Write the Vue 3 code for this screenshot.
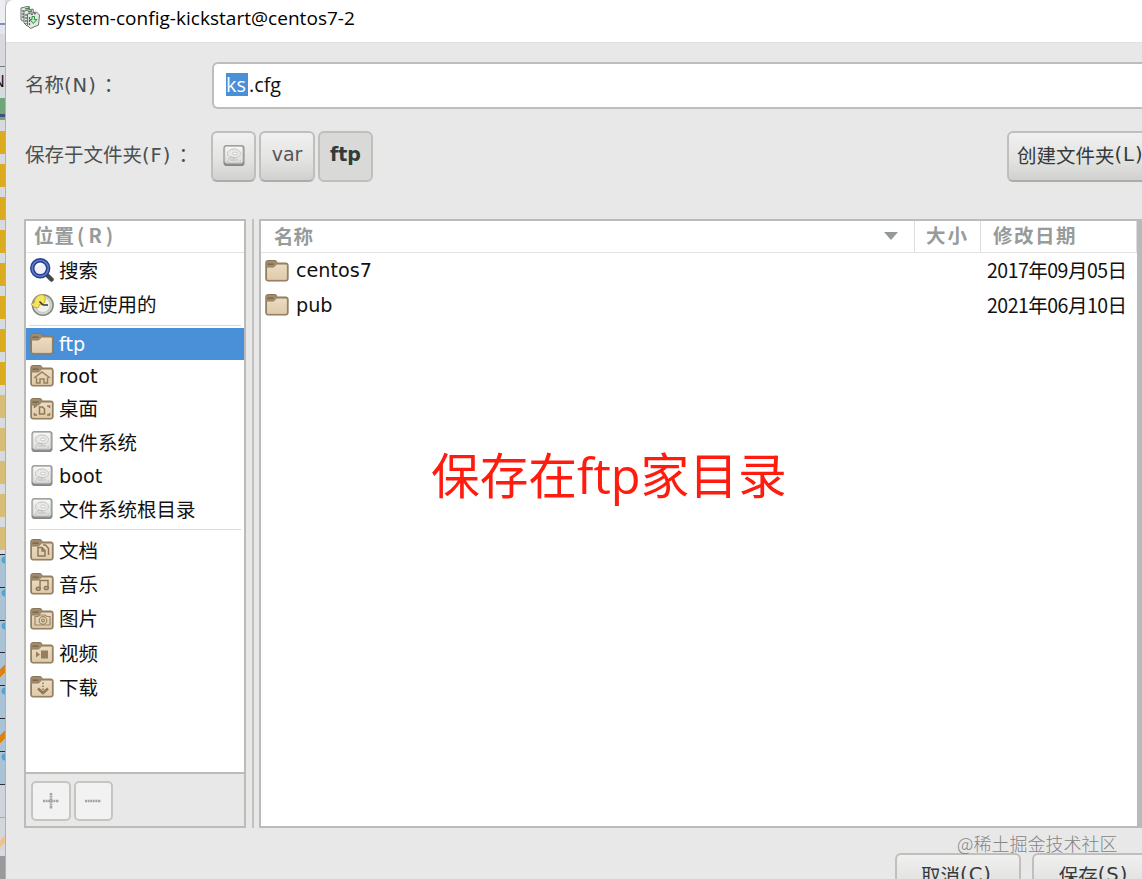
<template>
  <div class="screen">
    <!-- Borde de la ventana de atrás -->
    <div class="behind">
      <div class="behind-top"></div>
      <div class="behind-name">N</div>
      <div class="behind-green"></div>
      <div v-for="n in 13" :key="'g' + n" class="bar" :class="{ pale: n > 8 }"></div>
      <div
        v-for="n in 7"
        :key="'b' + n"
        class="tile"
        :class="{ slash: n === 4 || n === 6 }"
      ></div>
      <div class="tile-faded"></div>
      <div class="tile-faded second"></div>
      <div class="behind-bottom"></div>
    </div>

    <div class="window">
      <header class="titlebar">
        <svg class="app-icon" viewBox="0 0 20 24" width="20" height="24">
          <g fill="#e4e8e4" stroke="#6a736c" stroke-width="1">
            <path d="M1 2l8-2 2 12-8 3-2-1z" />
            <path d="M4 5l9-2 2 13-8 4-3-3z" />
            <path d="M7.500 8l9-2 3 3-1 10-8 3.500-3-3z" />
          </g>
          <path d="M5 3l4-1M8 6l4-1M3 4v8M6 8v10M9.500 11v8M11 8.500l5-1" stroke="#505b53" stroke-width="1.200" stroke-dasharray="2 1" />
          <path d="M12 10.500h2.500v3H17l-3.700 4-3.500-4H12z" fill="#b9ecba" stroke="#2f8e45" stroke-width="1" />
          <path d="M6.500 3l3-1M9 6l3-1" stroke="#2a963d" stroke-width="1.500" />
        </svg>
        <span class="title">system-config-kickstart@centos7-2</span>
      </header>

      <div class="name-row">
        <label class="name-label">名称<span class="mnemonic">(N)</span><span class="colon">：</span></label>
        <div class="name-input"><span class="selected">ks</span><span>.cfg</span></div>
      </div>

      <div class="path-row">
        <label class="path-label">保存于文件夹<span class="mnemonic">(F)</span><span class="colon">：</span></label>
        <button class="btn disk-btn">
          <svg viewBox="0 0 24 24" width="24" height="24"><use href="#disk" /></svg>
        </button>
        <button class="btn var-btn">var</button>
        <button class="btn ftp-btn">ftp</button>
        <button class="btn create-btn">创建文件夹<span class="mnemonic">(L)</span></button>
      </div>

      <div class="panes">
        <aside class="sidebar">
          <div class="places-head">位置<span class="key">(R)</span></div>
          <div class="places">
            <template v-for="place in places" :key="place.name">
              <div v-if="place.separator" class="separator"></div>
              <div class="place" :class="{ active: place.name === current }" @click="current = place.name">
                <svg class="icon" viewBox="0 0 24 24" width="24" height="24">
                  <use :href="'#' + place.icon" />
                  <use v-if="place.emblem" :href="'#' + place.emblem" />
                </svg>
                <span :class="place.latin ? 'latin' : 'cjk'">{{ place.name }}</span>
              </div>
            </template>
          </div>
          <div class="places-tools">
            <button class="tool">
              <svg viewBox="0 0 16 16" width="16" height="16">
                <path d="M0 8h16M8 0v16" stroke="#a2a4a4" stroke-width="2.600" stroke-dasharray="2 .6" />
              </svg>
            </button>
            <button class="tool">
              <svg viewBox="0 0 16 16" width="16" height="16">
                <path d="M0 8h16" stroke="#a2a4a4" stroke-width="2.600" stroke-dasharray="2 .6" />
              </svg>
            </button>
          </div>
        </aside>

        <div class="handle"></div>

        <main class="files">
          <div class="files-head">
            <div class="col-name">
              <span>名称</span>
              <svg viewBox="0 0 14 8" width="14" height="8"><path d="M0 0h14L7 8z" fill="#949a98" /></svg>
            </div>
            <div class="col-size">大小</div>
            <div class="col-date">修改日期</div>
          </div>
          <div v-for="file in files" :key="file.name" class="file">
            <svg class="icon" viewBox="0 0 24 24" width="24" height="24"><use href="#folder" /></svg>
            <span class="latin">{{ file.name }}</span>
            <span class="date">{{ file.date }}</span>
          </div>
          <div class="note">保存在<span class="note-latin">ftp</span>家目录</div>
        </main>
        <div class="edge"></div>
      </div>

      <footer class="actions">
        <button class="btn cancel-btn">取消<span class="mnemonic">(C)</span></button>
        <button class="btn save-btn">保存<span class="mnemonic">(S)</span></button>
        <span class="watermark">@稀土掘金技术社区</span>
      </footer>
    </div>

    <svg class="defs" width="0" height="0">
      <defs>
        <linearGradient id="paper" x1="0" y1="0" x2="0" y2="1">
          <stop offset="0" stop-color="#ecdcc3" />
          <stop offset="1" stop-color="#dfcaab" />
        </linearGradient>
        <linearGradient id="metal" x1="0" y1="0" x2="0" y2="1">
          <stop offset="0" stop-color="#f7f7f6" />
          <stop offset="1" stop-color="#dcdddb" />
        </linearGradient>
        <symbol id="folder" viewBox="0 0 24 24">
          <path d="M.8 19V3.500q0-2 2-2h7.500q1.500 0 1.800 2.500h9q2 0 2 2v14q0 2-2 2H2.800q-2 0-2-2z" fill="#a08b6d" stroke="#8c7859" />
          <path d="M1.500 8h7l3.200-3H21q1.400 0 1.400 1.400V20q0 1.400-1.400 1.400H3Q1.500 21.400 1.500 20z" fill="url(#paper)" stroke="#927d5d" />
          <path d="M2.500 5.200h6" stroke="#796a50" stroke-width="1.500" />
        </symbol>
        <symbol id="disk" viewBox="0 0 24 24">
          <path d="M2 3.500q0-1.800 1.800-1.800h16.400q1.800 0 1.800 1.800v16q0 2-2 2H4q-2 0-2-2z" fill="#8c8f8b" stroke="#858783" />
          <rect x="2.700" y="2.200" width="18.300" height="17" rx="1.800" fill="url(#metal)" stroke="#b4b6b2" />
          <ellipse cx="12" cy="9.500" rx="6.500" ry="4.500" fill="#e9eae8" stroke="#c3c5c1" />
          <ellipse cx="13" cy="9.500" rx="2.500" ry="1.400" fill="#fafafa" stroke="#bbb" stroke-width=".8" />
          <path d="M6 15.500l3-2.500 4 1M5 17h1.500M17.500 17H19M8 16h8" fill="none" stroke="#b9bbb7" />
        </symbol>
        <symbol id="search" viewBox="0 0 24 24">
          <path d="M17 17l4.500 4.500" stroke="#42484b" stroke-width="4.500" stroke-linecap="round" />
          <circle cx="10.200" cy="10.300" r="8" fill="#eef1f8" stroke="#273e93" stroke-width="4.400" />
          <circle cx="10.200" cy="10.300" r="8" fill="none" stroke="#5f7cc0" stroke-width="1.600" />
          <path d="M6.500 9q1-3.500 5-3" fill="none" stroke="#fff" stroke-width="2" />
        </symbol>
        <symbol id="recent" viewBox="0 0 24 24">
          <circle cx="12.800" cy="12" r="10.300" fill="#d4d6d0" stroke="#85887f" stroke-width="1.600" />
          <circle cx="12.800" cy="12" r="7.500" fill="#f0f1ef" stroke="#c5c7c1" />
          <path d="M1 11l3-1Q5 2.500 12 1.500l3 2V9l-3 3-2-1-2 4-4-1z" fill="#f3e563" stroke="#cfae23" />
          <path d="M13 12l-3.500-3.500M13 12h5" stroke="#333a35" stroke-width="1.500" />
        </symbol>
        <g id="home" fill="none" stroke="#98805d" stroke-width="1.500">
          <path d="M4 14l8-6 8 6M6.500 13.500V19H10v-4h4v4h3.500v-5.500" />
        </g>
        <g id="desktop" fill="none" stroke="#8e7857" stroke-width="1.500">
          <path d="M4.500 11V9H7M17 9h2.500v2M4.500 16v2H7M17 18h2.500v-2M9.500 10h3l2 2v5h-5z" />
        </g>
        <g id="docs" fill="none" stroke="#8e7857" stroke-width="1.500">
          <path d="M8 9.500h4l3 3V18H8zM12 9.500V13h3M13 7h2.500l3 3.500V17" />
        </g>
        <g id="music" fill="#c9ae87" stroke="#8e7857" stroke-width="1.400">
          <path d="M10 16.500V8.500h8V15.500" fill="none" />
          <ellipse cx="8.300" cy="16.800" rx="2" ry="1.600" />
          <ellipse cx="16.300" cy="16" rx="2" ry="1.600" />
        </g>
        <g id="pictures" fill="none" stroke="#9c8664" stroke-width="1.200">
          <path d="M5 9.500h3l2-1.500h5l2 1.500h3V18H5z" />
          <circle cx="13" cy="13.500" r="3.800" />
          <circle cx="13" cy="13.500" r="1.400" />
        </g>
        <g id="video" fill="#94805f">
          <path d="M11 9.500h7v8h-7zM6 10.500l4 3-4 3z" />
        </g>
        <g id="download" fill="none" stroke="#8e7857">
          <path d="M8 13.500l5 4.500 5-4.500" stroke-width="2.600" />
          <path d="M13 7.500v8" stroke-width="1.600" stroke-dasharray="1.500 1.500" />
        </g>
      </defs>
    </svg>
  </div>
</template>

<script setup>
import { ref } from 'vue'

const current = ref('ftp')

const places = [
  { name: '搜索', icon: 'search' },
  { name: '最近使用的', icon: 'recent' },
  { name: 'ftp', icon: 'folder', latin: true, separator: true },
  { name: 'root', icon: 'folder', emblem: 'home', latin: true },
  { name: '桌面', icon: 'folder', emblem: 'desktop' },
  { name: '文件系统', icon: 'disk' },
  { name: 'boot', icon: 'disk', latin: true },
  { name: '文件系统根目录', icon: 'disk' },
  { name: '文档', icon: 'folder', emblem: 'docs', separator: true },
  { name: '音乐', icon: 'folder', emblem: 'music' },
  { name: '图片', icon: 'folder', emblem: 'pictures' },
  { name: '视频', icon: 'folder', emblem: 'video' },
  { name: '下载', icon: 'folder', emblem: 'download' }
]

const files = [
  { name: 'centos7', date: '2017年09月05日' },
  { name: 'pub', date: '2021年06月10日' }
]
</script>

<style>
body {
  margin: 0;
  overflow: hidden;
}
</style>

<style scoped>
.screen {
  display: flex;
  width: 1142px;
  height: 879px;
  overflow: hidden;
  background: #d7dade;
  font-family: "Noto Sans CJK SC", sans-serif;
  font-size: 19.5px;
  color: #111;
}

.screen * {
  box-sizing: border-box;
}

.defs {
  position: absolute;
}

/* Ventana de atrás */
.behind {
  width: 5px;
  flex: none;
  overflow: hidden;
  background: #d7dade;
}

.behind-top {
  height: 66px;
  background: linear-gradient(#eeeef2 0 23px, #858fb5 23px 25px, #e3e6ed 25px 34px, #d8dade 34px);
}

.behind-name {
  height: 32px;
  border-top: 1px solid #777;
  font: 16px/29px "Liberation Sans", sans-serif;
  text-indent: -7px;
}

.behind-green {
  height: 33px;
  background: linear-gradient(#70a579 0 16px, #44507a 16px 19px, #70a579 19px 22px, #d7dade 22px);
}

.bar {
  height: 23px;
  margin-bottom: 10px;
  background: #dbac20;
}

.bar.pale {
  background: #d8bd78;
}

.bar:nth-of-type(16) {
  margin-bottom: 4px;
}

.tile {
  height: 32.800px;
  border-top: 1px solid #252a30;
  background: radial-gradient(circle at 5px 5px, #55a4ce 0 3px, transparent 4px), #a9c2d6;
}

.tile.slash {
  background: linear-gradient(135deg, transparent 0 43%, #dc8211 45% 65%, transparent 67%), #a9c2d6;
}

.tile-faded {
  height: 33px;
  border-top: 1px solid #29313a;
  background: #ced4d9;
}

.tile-faded.second {
  border-color: #aaa;
  background: linear-gradient(135deg, #d3d7db 0 60%, #eac393 61% 80%, #d3d7db 81%);
}

.behind-bottom {
  height: 40px;
  margin-top: 6px;
  background: #9a9a9c;
}

.window {
  flex: 1;
  min-width: 0;
  display: flex;
  flex-direction: column;
  border-left: 1px solid #b0b0b2;
  border-top-left-radius: 8px;
  background: #e8e8e8;
  overflow: hidden;
}

.titlebar {
  display: flex;
  height: 43px;
  flex: none;
  padding: 6px 0 0 14px;
  background: #fff;
  border-bottom: 1px solid #e0e0e0;
}

.title {
  margin: -1px 0 0 7px;
  font: 19px/26px "Open Sans", "Noto Sans", sans-serif;
  letter-spacing: .03px;
  color: #000;
}

/* Campos */
.name-row {
  display: flex;
  align-items: center;
  height: 47px;
  flex: none;
  margin-top: 19px;
  padding-left: 19px;
}

.name-label,
.path-label {
  width: 187px;
  flex: none;
  white-space: nowrap;
  font-family: "DejaVu Sans", "Noto Sans CJK SC", sans-serif;
  color: #4a4f50;
  line-height: 28px;
}

.path-label {
  width: 186px;
  margin: -1px 0 0 -1px;
}

.mnemonic {
  letter-spacing: 1px;
}

.colon {
  margin-left: 7px;
}

.name-input {
  display: flex;
  align-items: center;
  flex: 1;
  height: 47px;
  padding: 0 0 2px 12px;
  border: 2px solid #bdbdba;
  border-right: 0;
  border-radius: 6px 0 0 6px;
  background: #fff;
  font: 19.8px/23px "Open Sans", sans-serif;
}

.selected {
  width: 22px;
  margin-right: 1px;
  background: #4a90d9;
  color: #fff;
}

.path-row {
  display: flex;
  align-items: center;
  height: 52px;
  flex: none;
  margin-top: 21px;
  padding-left: 20px;
}

.btn {
  display: flex;
  align-items: center;
  justify-content: center;
  flex: none;
  height: 51px;
  padding: 0 0 4px;
  border: 2px solid #bfbfbc;
  border-bottom-color: #acaca9;
  border-radius: 6px;
  background: linear-gradient(#f0f0f0, #e2e2e1 60%, #d0d1cf);
  font-family: "DejaVu Sans", "Noto Sans CJK SC", sans-serif;
  font-size: 19.5px;
  white-space: nowrap;
  color: #343a3b;
}

.path-row .disk-btn {
  width: 45px;
  padding: 0;
}

.path-row .var-btn {
  width: 56px;
  margin-left: 3px;
  font-size: 19px;
  color: #555;
}

.path-row .ftp-btn {
  width: 55px;
  margin-left: 3px;
  border-color: #bfbfbc;
  background: #d9dad7;
  font-size: 19px;
  font-weight: bold;
}

.path-row .create-btn {
  width: 160px;
  margin-left: 634px;
  padding-left: 8px;
  justify-content: flex-start;
}

/* Paneles */
.panes {
  display: flex;
  height: 609px;
  flex: none;
  margin-top: 37px;
  padding-left: 18px;
}

.sidebar {
  display: flex;
  flex-direction: column;
  width: 222px;
  flex: none;
  border: 2px solid #bbbbb8;
  background: #fff;
}

.places-head {
  height: 32px;
  flex: none;
  padding-left: 8px;
  border-bottom: 1px solid #e2e2e2;
  font-weight: bold;
  line-height: 28px;
  letter-spacing: 1px;
  color: #979b9a;
}

.key {
  margin-left: 2px;
  letter-spacing: 4px;
}

.places {
  display: grid;
  grid-template-rows: 34px 35px 6px 32px 32px 33px 34px 33px 34px 7px 34px 34px 35px 34px 34px;
  flex: 1;
}

.place {
  display: flex;
  align-items: center;
  padding-left: 4px;
}

.place.active {
  background: #4a90d9;
  color: #fff;
}

.icon {
  flex: none;
  margin-right: 5px;
}

.cjk {
  margin-top: -1px;
  line-height: 28px;
  white-space: nowrap;
}

.latin {
  margin-top: 2px;
  font: 19.200px/28px "DejaVu Sans", sans-serif;
}

.separator {
  margin: 3px 3px 0;
  border-top: 1px solid #d9d9d9;
}

.places-tools {
  display: flex;
  gap: 3px;
  height: 54px;
  flex: none;
  padding: 7px 0 0 5px;
  border-top: 2px solid #bbbbb8;
  background: #e8e8e8;
}

.tool {
  display: flex;
  align-items: center;
  justify-content: center;
  width: 39.500px;
  height: 40px;
  padding: 0;
  border: 2px solid #c5c5c2;
  border-radius: 5px;
  background: #f2f2f2;
}

.handle {
  width: 2px;
  margin: 0 5px 0 6px;
  background: #c1c1be;
}

.files {
  flex: 1;
  min-width: 0;
  border: 2px solid #bbbbb8;
  border-right: 0;
  background: #fff;
}

.edge {
  width: 5px;
  background: #b9b9b9;
}

.files-head {
  display: grid;
  grid-template-columns: 654px 66px 1fr;
  height: 32px;
  border-bottom: 1px solid #e2e2e2;
  font-weight: bold;
  line-height: 28px;
  color: #979b9a;
}

.files-head > div {
  border-right: 1px solid #dedede;
  padding-left: 11px;
}

.files-head .col-name {
  display: flex;
  align-items: center;
  justify-content: space-between;
  padding: 0 16px 2px 13px;
}

.files-head .col-date {
  padding-left: 12px;
  letter-spacing: 1.5px;
}

.files-head .col-size {
  letter-spacing: 2px;
}

.file {
  display: flex;
  align-items: center;
  height: 34.500px;
  padding-left: 4px;
}

.file .icon {
  margin: 1px 7px 0 0;
}

.date {
  width: 150px;
  margin: -1px 0 0 auto;
  white-space: nowrap;
  letter-spacing: -.5px;
}

.note {
  margin: 115px 0 0 170px;
  font-size: 48.700px;
  line-height: 72px;
  color: #ff1c0f;
}

.note-latin {
  font-family: "Open Sans", sans-serif;
}

.actions {
  position: relative;
  display: flex;
  gap: 11px;
  padding: 25px 0 0 889px;
}

.actions .btn {
  height: 48px;
  padding: 0 3px 5px 0;
}

.cancel-btn {
  width: 126px;
}

.save-btn {
  width: 126px;
}

.watermark {
  position: absolute;
  left: 951px;
  top: 3px;
  font-size: 18px;
  line-height: 24px;
  font-weight: 300;
  white-space: nowrap;
  color: #858585;
}
</style>
